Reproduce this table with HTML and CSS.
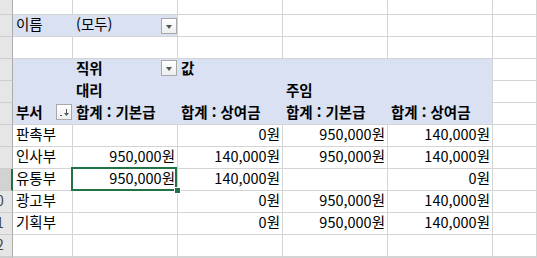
FILE: index.html
```html
<!DOCTYPE html>
<html lang="ko">
<head>
<meta charset="utf-8">
<title>피벗 테이블</title>
<link rel="stylesheet" href="styles.css">
</head>
<body>
<div class="sheet">
  <!-- row 1 -->
  <div class="rh"></div>
  <div class="c"></div><div class="c"></div><div class="c"></div><div class="c"></div><div class="c"></div><div class="c"></div>
  <!-- row 2 -->
  <div class="rh"></div>
  <div class="c pv inner">이름</div>
  <div class="c pv">(모두)<span class="dd low"><i class="tri"></i></span></div>
  <div class="c"></div><div class="c"></div><div class="c"></div><div class="c"></div>
  <!-- row 3 -->
  <div class="rh"></div>
  <div class="c"></div><div class="c"></div><div class="c"></div><div class="c"></div><div class="c"></div><div class="c"></div>
  <!-- row 4 -->
  <div class="rh"></div>
  <div class="c pv inner mid"></div>
  <div class="c pv inner mid b">직위<span class="dd high"><i class="tri"></i></span></div>
  <div class="c pv inner mid b">값</div>
  <div class="c pv inner mid"></div>
  <div class="c pv mid"></div>
  <div class="c"></div>
  <!-- row 5 -->
  <div class="rh"></div>
  <div class="c pv inner mid"></div>
  <div class="c pv inner mid b">대리</div>
  <div class="c pv inner mid"></div>
  <div class="c pv inner mid b">주임</div>
  <div class="c pv mid"></div>
  <div class="c"></div>
  <!-- row 6 -->
  <div class="rh"></div>
  <div class="c pv inner b">부서<span class="dd high sort"><svg width="14" height="14" viewBox="0 0 14 14"><rect x="3" y="10" width="2" height="1" fill="#555"/><rect x="9" y="4" width="1" height="6" fill="#555"/><polygon points="7,8 12,8 9.5,11" fill="#555"/></svg></span></div>
  <div class="c pv inner b">합계 : 기본급</div>
  <div class="c pv inner b">합계 : 상여금</div>
  <div class="c pv inner b">합계 : 기본급</div>
  <div class="c pv b">합계 : 상여금</div>
  <div class="c"></div>
  <!-- row 7 -->
  <div class="rh"></div>
  <div class="c">판촉부</div>
  <div class="c num"></div>
  <div class="c num">0원</div>
  <div class="c num">950,000원</div>
  <div class="c num">140,000원</div>
  <div class="c"></div>
  <!-- row 8 -->
  <div class="rh"></div>
  <div class="c">인사부</div>
  <div class="c num">950,000원</div>
  <div class="c num">140,000원</div>
  <div class="c num">950,000원</div>
  <div class="c num">140,000원</div>
  <div class="c"></div>
  <!-- row 9 -->
  <div class="rh sel"></div>
  <div class="c">유통부</div>
  <div class="c num active">950,000원<span class="cursor"></span><span class="handle"></span></div>
  <div class="c num">140,000원</div>
  <div class="c num"></div>
  <div class="c num">0원</div>
  <div class="c"></div>
  <!-- row 10 -->
  <div class="rh"><span>10</span></div>
  <div class="c">광고부</div>
  <div class="c num"></div>
  <div class="c num">0원</div>
  <div class="c num">950,000원</div>
  <div class="c num">140,000원</div>
  <div class="c"></div>
  <!-- row 11 -->
  <div class="rh"><span>11</span></div>
  <div class="c">기획부</div>
  <div class="c num"></div>
  <div class="c num">0원</div>
  <div class="c num">950,000원</div>
  <div class="c num">140,000원</div>
  <div class="c"></div>
  <!-- row 12 -->
  <div class="rh"><span>12</span></div>
  <div class="c"></div><div class="c"></div><div class="c"></div><div class="c"></div><div class="c"></div><div class="c"></div>
  <!-- row 13 -->
  <div class="rh"></div>
  <div class="c"></div><div class="c"></div><div class="c"></div><div class="c"></div><div class="c"></div><div class="c"></div>
</div>
</body>
</html>
```
FILE: styles.css
```css
html, body {
  margin: 0;
  padding: 0;
  background: #ffffff;
  overflow: hidden;
}

body {
  width: 537px;
  height: 258px;
  font-family: "Noto Sans CJK KR", "Noto Sans", sans-serif;
  font-size: 14.5px;
  color: #000000;
}

.sheet {
  display: grid;
  grid-template-columns: 13px 60px 105px 105px 105px 105px 1fr;
  grid-template-rows: 15px repeat(11, 22px) 1px;
  width: 537px;
  height: 258px;
  overflow: hidden;
}

.rh {
  box-sizing: border-box;
  background: #e6e6e6;
  border-right: 1px solid #ababab;
  border-bottom: 1px solid #cdcdcd;
  overflow: hidden;
  font-size: 14px;
  line-height: 18px;
  color: #444444;
}

.rh span {
  display: block;
  width: 34px;
  margin-left: -21px;
  text-align: center;
}

.rh.sel {
  background: #d2d2d2;
  border-right: 2px solid #217346;
}

.c {
  box-sizing: border-box;
  border-right: 1px solid #d4d4d4;
  border-bottom: 1px solid #d4d4d4;
  padding: 0 3px;
  display: flex;
  align-items: flex-start;
  line-height: 18px;
  white-space: nowrap;
  min-width: 0;
}

.pv {
  background: #d9e1f2;
}

.pv.inner {
  border-right-color: #d9e1f2;
}

.pv.mid {
  border-bottom-color: #d9e1f2;
}

.b {
  font-weight: bold;
}

.num {
  justify-content: flex-end;
  padding-right: 2px;
}

.dd {
  box-sizing: border-box;
  width: 16px;
  height: 16px;
  margin-left: auto;
  margin-right: -3px;
  border: 1px solid #a8a8a8;
  background: linear-gradient(#ffffff, #eeeeee);
  display: flex;
  align-items: center;
  justify-content: center;
  flex: none;
}

.dd.low {
  align-self: flex-end;
  margin-bottom: 2px;
}

.dd.high {
  align-self: flex-start;
  margin-top: 1px;
}

.tri {
  display: block;
  width: 0;
  height: 0;
  margin-top: 2px;
  border-left: 3.5px solid transparent;
  border-right: 3.5px solid transparent;
  border-top: 4px solid #555555;
}

.sort svg {
  display: block;
}

.active {
  position: relative;
}

.cursor {
  position: absolute;
  left: -2px;
  top: -2px;
  width: 106px;
  height: 24px;
  box-sizing: border-box;
  border: 2px solid #217346;
}

.handle {
  position: absolute;
  left: 101px;
  top: 18px;
  width: 5px;
  height: 5px;
  background: #217346;
  border: 1px solid #ffffff;
}
```
